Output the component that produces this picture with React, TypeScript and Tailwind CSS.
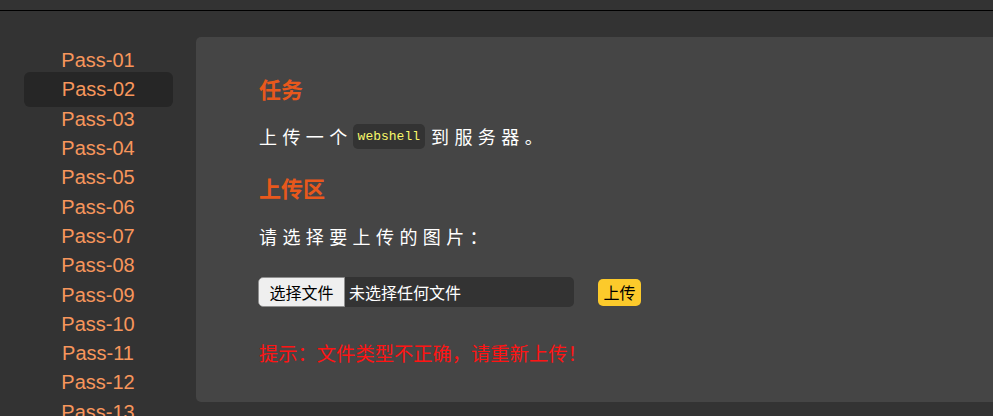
import React from "react";

const passes = Array.from({ length: 13 }, (_, i) => `Pass-${String(i + 1).padStart(2, "0")}`);

const cjk = "font-['Noto_Sans_CJK_SC','Noto_Sans',sans-serif]";

const App = () => {
  const active = "Pass-02";

  return (
    <div className="h-[416px] w-[993px] overflow-hidden bg-[#333333]">
      {/* top bar */}
      <div className="h-[10px] bg-[#333333]" />
      <div className="h-px bg-black" />

      <div className="flex items-start pt-[26px]">
        {/* sidebar */}
        <div className="w-[196px] shrink-0 pt-[8.5px]">
          {passes.map((p) => (
            <div
              key={p}
              className={
                p === active
                  ? "relative z-0 mx-[24px] mr-[23px] -my-[2.85px] flex h-[35px] items-center justify-center rounded-[6px] bg-[#262626]"
                  : "relative z-10 flex h-[29.3px] items-center justify-center"
              }
            >
              <span className="font-['Liberation_Sans',Arial,sans-serif] text-[20px] leading-none text-[#f7965c]">
                {p}
              </span>
            </div>
          ))}
        </div>

        {/* content panel */}
        <div className={`flex-1 rounded-l-[5px] bg-[#454545] pl-[63px] pt-[36px] pb-[34px] ${cjk}`}>
          <h2 className="text-[22px] font-bold leading-[30px] text-[#e8581c]">任务</h2>

          <p className="mt-[18px] flex items-center text-[18px] leading-[30px] tracking-[0.3em] text-white">
            <span>上传一个</span>
            <code className="mr-[6px] rounded-[5px] bg-[#333333] px-[5px] font-['Liberation_Mono',monospace] text-[13px] font-normal leading-[25px] tracking-normal text-[#f8f86a]">
              webshell
            </code>
            <span>到服务器。</span>
          </p>

          <h2 className="mt-[21px] text-[22px] font-bold leading-[30px] text-[#e8581c]">上传区</h2>

          <p className="mt-[19px] text-[18px] leading-[30px] tracking-[0.3em] text-white">
            请选择要上传的图片：
          </p>

          <div className="mt-[26px] -ml-px flex items-center">
            <div className="flex h-[30px] w-[316px] items-center overflow-hidden rounded-[5px] bg-[#333333]">
              <div className="flex h-full w-[87px] items-center justify-center rounded-l-[5px] border border-[#8f8f8f] bg-[#efefef] text-[16px] text-black">
                选择文件
              </div>
              <span className="pl-[4px] text-[16px] text-white">未选择任何文件</span>
            </div>
            <button className="ml-[24px] h-[27px] w-[43px] rounded-[5px] bg-[#fcca2b] text-[16px] leading-[27px] text-black">
              上传
            </button>
          </div>

          <p className="mt-[31px] text-[19.3px] leading-[30px] text-[#ff1414]">
            提示：文件类型不正确，请重新上传！
          </p>
        </div>
      </div>
    </div>
  );
};

export default App;
